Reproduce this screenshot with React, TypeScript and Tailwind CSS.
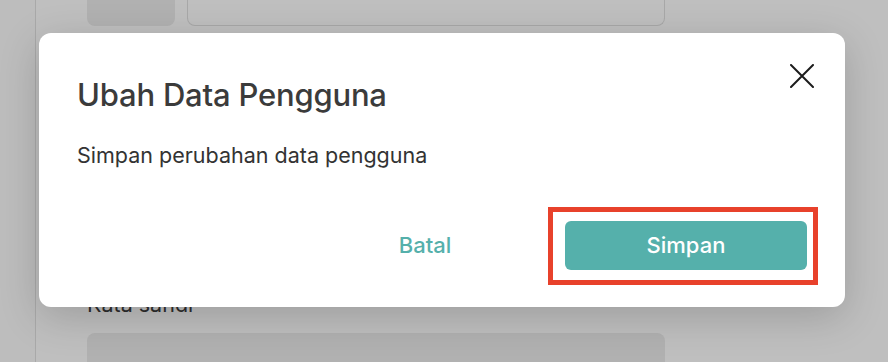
import React from 'react';

const font = { fontFamily: 'Inter, "Noto Sans", sans-serif' };

export default function App() {
  return (
    <div className="relative h-[362px] w-[888px] overflow-hidden bg-[#bfbfbf]" style={font}>
      {/* page behind the modal */}
      <div className="flex h-full">
        <div className="w-[36px] shrink-0 border-r border-[#a9a9a9] bg-[#bdbdbd]" />
        <div className="flex flex-1 flex-col pl-[51px]">
          <div className="flex h-[26px] shrink-0 gap-3">
            <div className="w-[88px] rounded-b-lg bg-[#b1b1b1]" />
            <div className="w-[478px] rounded-b-lg border border-t-0 border-[#a8a8a8]" />
          </div>
          <p className="mt-[264px] shrink-0 text-[21.5px] leading-7 text-[#2d2d2d]">Kata sandi</p>
          <div className="mt-[15px] h-[60px] w-[578px] shrink-0 rounded-lg bg-[#b1b1b1]" />
        </div>
      </div>

      {/* modal */}
      <div className="absolute left-[39px] top-[33px] flex h-[274px] w-[806px] flex-col rounded-xl bg-white px-[38px] shadow-[0_10px_40px_rgba(0,0,0,0.18)]">
        <button className="absolute right-[31px] top-[31px] h-6 w-6 text-[#1c1c1c]">
          <svg viewBox="0 0 24 24" width="24" height="24" fill="none" stroke="currentColor" strokeWidth="2" strokeLinecap="round">
            <path d="M1 1L23 23M23 1L1 23" />
          </svg>
        </button>
        <h2 className="mt-[43px] text-[31px] font-medium leading-[38px] tracking-[-0.2px] text-[#3b3b3b]">Ubah Data Pengguna</h2>
        <p className="mt-[27px] text-[21.5px] leading-7 text-[#333333]">Simpan perubahan data pengguna</p>
        <div className="mt-auto mb-[37px] flex justify-end gap-[19px]">
          <button className="h-[49px] w-[242px] rounded-md text-[22px] font-medium text-[#55b0ab]">Batal</button>
          <button className="h-[49px] w-[242px] rounded-md bg-[#55b0ab] text-[22px] font-medium text-white">Simpan</button>
        </div>
        {/* highlight annotation */}
        <div className="pointer-events-none absolute left-[509px] top-[174px] h-[78px] w-[270px] border-[5px] border-[#e8412b]" />
      </div>
    </div>
  );
}
